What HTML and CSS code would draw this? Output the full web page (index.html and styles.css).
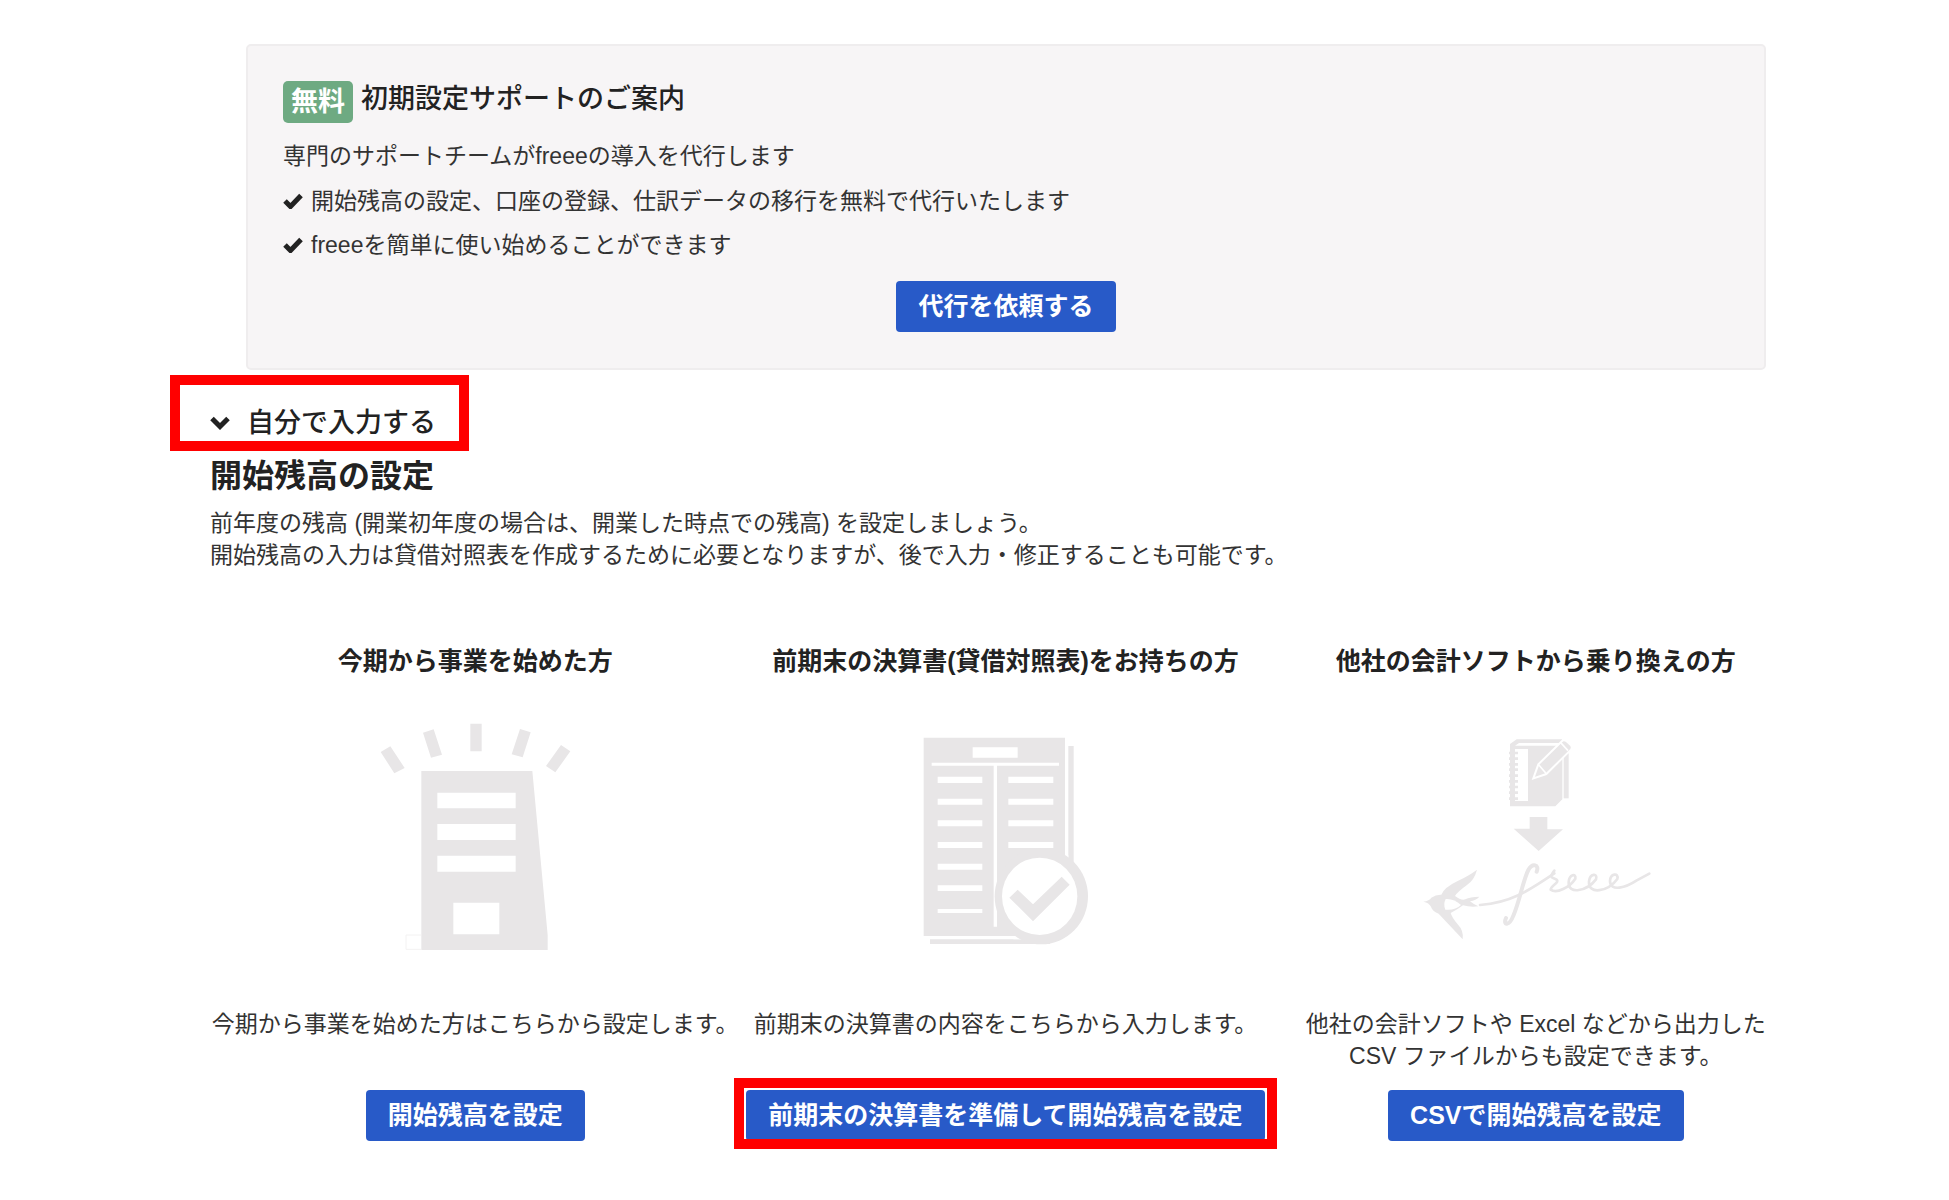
FILE: index.html
```html
<!DOCTYPE html>
<html lang="ja">
<head>
<meta charset="utf-8">
<title>開始残高の設定</title>
<link rel="stylesheet" href="styles.css">
</head>
<body>
<main class="page">
  <section class="support">
    <div class="support-head">
      <span class="badge">無料</span>
      <h2 class="support-title">初期設定サポートのご案内</h2>
    </div>
    <p class="text">専門のサポートチームがfreeeの導入を代行します</p>
    <ul class="benefits">
      <li><svg class="check" viewBox="0 0 20 16" aria-hidden="true"><path d="M2 8l5.500 5.500L18 2.500" /></svg>開始残高の設定、口座の登録、仕訳データの移行を無料で代行いたします</li>
      <li><svg class="check" viewBox="0 0 20 16" aria-hidden="true"><path d="M2 8l5.500 5.500L18 2.500" /></svg>freeeを簡単に使い始めることができます</li>
    </ul>
    <button type="button" class="btn">代行を依頼する</button>
  </section>

  <button type="button" class="toggle marked" aria-expanded="true">
    <svg class="chevron" viewBox="0 0 20 14" aria-hidden="true"><path d="M2 2.500l8 8 8-8" /></svg>自分で入力する
  </button>

  <section class="balance">
    <h1 class="balance-title">開始残高の設定</h1>
    <p class="text">前年度の残高 (開業初年度の場合は、開業した時点での残高) を設定しましょう。<br>開始残高の入力は貸借対照表を作成するために必要となりますが、後で入力・修正することも可能です。</p>

    <div class="options">
      <article class="option">
        <h3 class="option-title">今期から事業を始めた方</h3>
        <svg class="art" viewBox="0 0 750 810" width="250" height="270" aria-hidden="true">
          <path d="M361 71h34v83h-34zM219 98l32-10 25 76-33 9zM510 87l32 10-24 75-33-9zM92 156l29-17 43 65-31 16zM633 135l28 19-45 63-28-19z" />
          <path fill-rule="evenodd" d="M214 213H547L593 705V750H214zM262 278V325H497V278zM262 372V420H497V372zM262 467V515H497V467zM310 608V703H448V608z" />
          <path class="faint" d="M214 705h-46v43h46" />
        </svg>
        <p class="text option-text">今期から事業を始めた方はこちらから設定します。</p>
        <button type="button" class="btn">開始残高を設定</button>
      </article>

      <article class="option">
        <h3 class="option-title">前期末の決算書(貸借対照表)をお持ちの方</h3>
        <svg class="art" viewBox="0 -30 690 810" width="230" height="270" aria-hidden="true">
          <path d="M101 83H525V678H101z" />
          <path d="M535 108h16v360h-16zM120 688H480v14H120z" />
          <path class="hole" d="M248 112h135v31H248zM125 158h382v9H125zM311 163h10v487h-10z" />
          <path class="hole" d="M143 200h134v19H143zM143 266h134v18H143zM143 331h134v18H143zM143 396h134v18H143zM143 461h134v18H143zM143 526h134v17H143zM143 597h134v12H143zM355 200h135v19H355zM355 266h135v18H355zM355 331h135v18H355zM355 396h135v18H355z" />
          <path class="hole" d="M525 430l10 6v14h-10zM370 678l25 10h-25z" />
          <ellipse cx="454" cy="559" rx="140" ry="144" />
          <ellipse class="hole" cx="449" cy="559" rx="113" ry="116" />
          <path d="M358 563l25-24 46 44 86-83 24 24-110 110z" />
        </svg>
        <p class="text option-text">前期末の決算書の内容をこちらから入力します。</p>
        <button type="button" class="btn marked">前期末の決算書を準備して開始残高を設定</button>
      </article>

      <article class="option">
        <h3 class="option-title">他社の会計ソフトから乗り換えの方</h3>
        <svg class="art" viewBox="-12 -60 840 810" width="280" height="270" aria-hidden="true">
          <path fill-rule="evenodd" d="M330 72L350 58H486V69H357L345 77H487V238L466 259H330zM345 87V243H384V87z" />
          <path d="M491 100h15v135h-15z" />
          <path class="rings" d="M327 99h27M327 116h27M327 133h27M327 149h27M327 167h27M327 184h27M327 201h27M327 218h27M327 236h27" />
          <path class="pencil" d="M400 175l15-42 72-71q6-4 13 2l13 12q5 7 0 13l-74 73z" />
          <path class="pencil-line" d="M416 134l23 27M482 68l22 24" />
          <path d="M389 291h53v37h47l-73 65-75-67h48z" />
          <path d="M70 545q18-3 24-12 14-10 30-9 9-22 49-41 36-17 58-34-8 31-31 47-28 20-35 32 18 14 31 10 14-8 42-8-10 11-28 14 8 7 25 15-24 3-46-3-14 11-37 23 4 14 21 34 19 20 15 45l-72-77q-17-4-24-22-4-10-22-14z" />
          <path class="hole" d="M137 537q25-2 46 18-18 17-47 14-7-15 1-32z" />
          <path class="script" d="M240 555c92-7 140-39 223-95" />
          <path class="script f-stem" d="M410 455c9-22-13-27-25-5-16 31-25 90-45 137-12 32-32 30-22 7" />
          <path class="script" d="M463 452c-20 27-2 18 8 28 7 9-18 16-19 29 18 13 57-7 74-33 3-17-18-13-20 10-2 40 55 27 82-8 6-20-18-18-21 6-3 42 57 31 85-7 5-20-21-17-22 6 0 34 49 19 79-1l39-21" />
        </svg>
        <p class="text option-text">他社の会計ソフトや Excel などから出力した<br>CSV ファイルからも設定できます。</p>
        <button type="button" class="btn">CSVで開始残高を設定</button>
      </article>
    </div>
  </section>
</main>
</body>
</html>
```
FILE: styles.css
```css
* {
  box-sizing: border-box;
}

body {
  margin: 0;
  background: #fff;
  color: #333;
  font-family: "Liberation Sans", "Noto Sans CJK JP", sans-serif;
  font-size: 23px;
  line-height: 32px;
}

h1,
h2,
h3,
p,
ul {
  margin: 0;
  padding: 0;
}

.page {
  padding: 44px 148px 40px 210px;
}

.support {
  display: flex;
  flex-direction: column;
  margin: 0 35px 0 36px;
  padding: 35px 35px 36px;
  border: 2px solid #efedee;
  border-radius: 5px;
  background: #f7f5f6;
}

.support-head {
  display: flex;
  gap: 8px;
  margin-bottom: 17px;
}

.badge {
  padding: 0 8px;
  border-radius: 5px;
  background: #6eaa82;
  color: #fff;
  font-size: 27px;
  font-weight: bold;
  line-height: 42px;
}

.support-title {
  color: #222;
  font-size: 27px;
  font-weight: 500;
  line-height: 36px;
}

.benefits {
  margin: 7px 0 14px;
  list-style: none;
  line-height: 44px;
}

.benefits li {
  display: flex;
  align-items: center;
  gap: 8px;
}

.check,
.chevron {
  width: 20px;
  fill: none;
  stroke: #222;
  stroke-width: 5;
}

.btn {
  position: relative;
  align-self: center;
  height: 51px;
  padding: 0 22px;
  border: 0;
  border-radius: 4px;
  background: #285ac8;
  color: #fff;
  font: bold 25px/51px "Liberation Sans", "Noto Sans CJK JP", sans-serif;
  white-space: nowrap;
}

.toggle {
  position: relative;
  display: flex;
  align-items: center;
  gap: 17px;
  margin-top: 37px;
  padding: 0;
  border: 0;
  background: none;
  color: #222;
  font: 500 27px/32px "Liberation Sans", "Noto Sans CJK JP", sans-serif;
}

/* Red frame that points the reader to a control */
.marked::after {
  content: "";
  position: absolute;
  border: 10px solid #f00;
}

.toggle.marked::after {
  inset: -32px -33px -12px -40px;
}

.btn.marked::after {
  inset: -12px -12px -8px;
}

.balance-title {
  margin-top: 17px;
  margin-bottom: 11px;
  color: #222;
  font-size: 32px;
  line-height: 40px;
}

.options {
  display: grid;
  grid-template-columns: repeat(3, 1fr);
  margin-top: 74px;
}

.option {
  display: flex;
  flex-direction: column;
  align-items: center;
  text-align: center;
}

.option-title {
  color: #222;
  font-size: 25px;
  font-weight: bold;
  white-space: nowrap;
}

.option-text {
  min-height: 64px;
  margin-bottom: 18px;
  white-space: nowrap;
}

.art {
  margin: 23px 0 38px;
  fill: #e8e6e7;
}

.art .hole {
  fill: #fff;
}

.art .faint {
  fill: none;
  stroke: #f3f2f2;
  stroke-width: 3;
}

.rings {
  stroke: #e8e6e7;
  stroke-width: 8;
}

.pencil {
  stroke: #fff;
  stroke-width: 6;
}

.pencil-line {
  stroke: #fff;
  stroke-width: 5;
}

.script {
  fill: none;
  stroke: #e8e6e7;
  stroke-width: 8;
  stroke-linecap: round;
  stroke-linejoin: round;
}

.f-stem {
  stroke-width: 12;
}
```
